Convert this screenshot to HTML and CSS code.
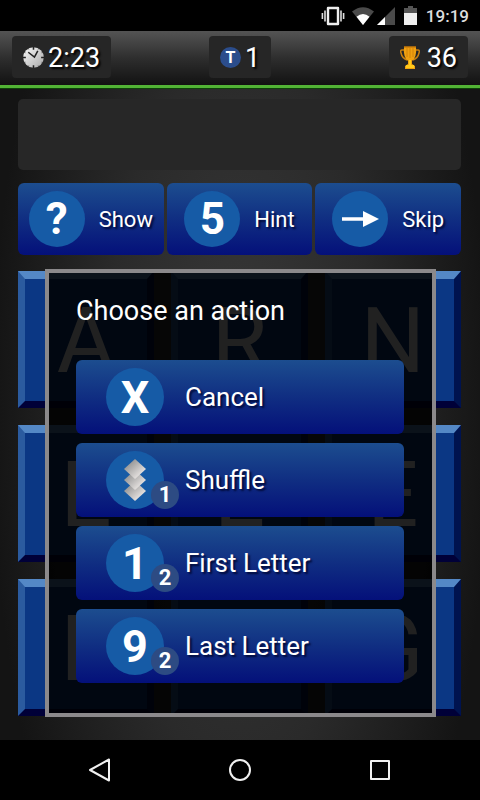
FILE: index.html
```html
<!DOCTYPE html>
<html lang="en">
<head>
<meta charset="utf-8">
<meta name="viewport" content="width=device-width, initial-scale=1">
<title>Word Game</title>
<link rel="stylesheet" href="styles.css">
</head>
<body>
<div class="status">
  <svg width="24" height="20" viewBox="0 0 24 20" aria-hidden="true">
    <path d="M7 2h10v16H7z" fill="none" stroke="#eee" stroke-width="2.4" stroke-linejoin="round"/>
    <path d="M4 4.500v11M20 4.500v11M1.400 7v6M22.600 7v6" stroke="#ddd" stroke-width="1.600"/>
  </svg>
  <svg class="wifi" width="22" height="18" viewBox="0 0 22 18" aria-hidden="true">
    <path d="M0 4.500Q11-4 22 4.500L11 18z" fill="#4a4a4a"/>
    <path d="M4.500 9.800Q11 4 17.500 9.800L11 18z" fill="#fff"/>
  </svg>
  <svg class="signal" width="18" height="18" viewBox="0 0 18 18" aria-hidden="true">
    <path d="M18 0v18H0z" fill="#4a4a4a"/>
    <path d="M8 10v8H0z" fill="#fff"/>
  </svg>
  <svg class="battery" width="13" height="19" viewBox="0 0 13 19" aria-hidden="true">
    <path d="M4 0h5v2h4v5H0V2h4z" fill="#555"/>
    <path d="M0 7h13v12H0z" fill="#eee"/>
  </svg>
  <span class="time">19:19</span>
</div>

<header class="topbar">
  <div class="stat">
    <svg width="21" height="21" viewBox="0 0 22 22" aria-hidden="true">
      <defs><linearGradient id="clock" x1="0" y1="0" x2="1" y2="1"><stop offset="0" stop-color="#f8f8f8"/><stop offset="1" stop-color="#aaa"/></linearGradient></defs>
      <circle cx="11" cy="11" r="10.800" fill="url(#clock)"/>
      <path d="M11 0v3M11 19v3M0 11h3M19 11h3" stroke="#222" stroke-width="1.600"/>
      <path d="M5.500 1.500l.5 1M16.500 1.500l-.5 1M5.500 20.500l.5-1M16.500 20.500l-.5-1M1.500 5.500l1 .5M20.500 5.500l-1 .5M1.500 16.500l1-.5M20.500 16.500l-1-.5" stroke="#444" stroke-width="1"/>
      <path d="M5.500 5.500L12 10.500L15.500 4" fill="none" stroke="#222" stroke-width="1.600"/>
    </svg>
    <span>2:23</span>
  </div>
  <div class="stat">
    <span class="token">T</span>
    <span>1</span>
  </div>
  <div class="stat score">
    <svg width="20" height="23" viewBox="0 0 20 23" aria-hidden="true">
      <path d="M5 4H2Q0 4 1 7Q2 12 7 14M15 4h3q2 0 1 3q-1 5-6 7" fill="none" stroke="#c97f10" stroke-width="1.500"/>
      <path d="M4 1h12q1 10-4 14v3l3 2v3H5v-3l3-2v-3Q3 11 4 1z" fill="#f0a010"/>
      <path d="M7 2v9M10 2v10M13 2v9" stroke="#d48208" stroke-width="1"/>
      <path d="M4 1h12" stroke="#c97a08" stroke-width="1.500"/>
      <path d="M9 14h2v5h3v3H6v-3h3z" fill="#ffcb1a"/>
    </svg>
    <span>36</span>
  </div>
</header>

<main class="game">
  <div class="answer"></div>

  <div class="tools">
    <button class="btn tool" type="button"><span class="disc">?</span>Show</button>
    <button class="btn tool" type="button"><span class="disc">5</span>Hint</button>
    <button class="btn tool" type="button"><span class="disc">
      <svg width="38" height="16" viewBox="0 0 38 16" aria-hidden="true"><path d="M1 6.200h21V0l16 8l-16 8V9.800H1z" fill="#fff"/></svg>
    </span>Skip</button>
  </div>

  <div class="board">
    <div class="tiles">
      <div class="tile">A</div><div class="tile">R</div><div class="tile">N</div>
      <div class="tile">E</div><div class="tile">E</div><div class="tile">E</div>
      <div class="tile">E</div><div class="tile">N</div><div class="tile">G</div>
    </div>

    <section class="dialog" role="dialog" aria-labelledby="dialog-title">
      <h1 id="dialog-title">Choose an action</h1>
      <div class="actions">
        <button class="btn action" type="button"><span class="disc">X</span>Cancel</button>
        <button class="btn action" type="button"><span class="disc">
          <svg width="22" height="42" viewBox="0 0 22 42" aria-hidden="true">
            <defs><linearGradient id="steel" x1="0" y1="0" x2="1" y2="1"><stop offset="0.200" stop-color="#949494"/><stop offset="0.800" stop-color="#e8e4e2"/></linearGradient></defs>
            <path d="M11 22L22 32L11 42L0 32z" fill="url(#steel)"/>
            <path d="M11 11L22 21L11 31L0 21z" fill="url(#steel)"/>
            <path d="M11 0L22 10L11 20L0 10z" fill="url(#steel)"/>
          </svg>
          <span class="badge">1</span></span>Shuffle</button>
        <button class="btn action" type="button"><span class="disc">1<span class="badge">2</span></span>First Letter</button>
        <button class="btn action" type="button"><span class="disc">9<span class="badge">2</span></span>Last Letter</button>
      </div>
    </section>
  </div>
</main>

<nav class="navbar">
  <button type="button" aria-label="Back"><svg width="24" height="24" viewBox="0 0 24 24"><path d="M21 1.500v21L2 12z"/></svg></button>
  <button type="button" aria-label="Home"><svg width="24" height="24" viewBox="0 0 24 24"><circle cx="12" cy="12" r="10"/></svg></button>
  <button type="button" aria-label="Recent apps"><svg width="24" height="24" viewBox="0 0 24 24"><path d="M3 3h18v18H3z"/></svg></button>
</nav>
</body>
</html>
```

FILE: styles.css
```css
* { box-sizing: border-box; }

body {
  margin: 0;
  min-height: 100vh;
  display: flex;
  flex-direction: column;
  background: #000;
  color: #fff;
  font-family: Roboto, "Liberation Sans", sans-serif;
}

button {
  margin: 0;
  padding: 0;
  border: 0;
  background: none;
  color: inherit;
  font: inherit;
  cursor: pointer;
}

svg { display: block; flex: none; }

.status {
  height: 31px;
  padding: 0 11px;
  display: flex;
  align-items: center;
  justify-content: flex-end;
}
.wifi { margin-left: 7px; }
.signal { margin-left: 3px; }
.battery { margin-left: 9px; }
.time {
  margin-left: 9px;
  font-size: 17px;
  font-weight: 500;
  color: #ddd;
}

.topbar {
  padding: 5px 12px 7px;
  display: grid;
  grid-template-columns: 1fr auto 1fr;
  justify-items: start;
  background: linear-gradient(#545454, #2e2e2e 50%, #121212);
}

.stat {
  height: 42px;
  padding: 0 11px;
  display: flex;
  align-items: center;
  gap: 4px;
  border-radius: 4px;
  background: #262626;
  font-size: 27px;
  line-height: 42px;
  text-shadow: 2px 2px 2px #000;
}
.stat span { margin-top: 2px; }
.score {
  justify-self: end;
  gap: 7px;
}

.stat .token {
  width: 21px;
  height: 21px;
  margin-top: 0;
  border-radius: 50%;
  background: #2b4d8c;
  font-size: 16px;
  font-weight: 700;
  line-height: 21px;
  text-align: center;
  text-shadow: none;
}

.game {
  flex: 1;
  padding: 10px 19px 24px 18px;
  display: flex;
  flex-direction: column;
  border-top: 3px solid #52b335;
  box-shadow: inset 0 1px #0c4208;
  background: radial-gradient(ellipse 52% 100% at 50% 50%, #3a3a3a, #2a2a2a 55%, #141414);
}

.answer {
  height: 71px;
  margin-top: 1px;
  border-radius: 5px;
  background: #272727;
}

.btn {
  display: flex;
  align-items: center;
  border-radius: 6px;
  background: linear-gradient(#1c4d8f, #102e82 50%, #04107a);
  text-shadow: 2px 2px 2px #000a38;
}

.disc {
  position: relative;
  flex: none;
  display: flex;
  align-items: center;
  justify-content: center;
  border-radius: 50%;
  background: #165ba6;
  font-weight: 700;
  text-shadow: none;
}

.tools {
  margin-top: 13px;
  display: grid;
  grid-template-columns: repeat(3, 1fr);
  gap: 3px;
}
.tool {
  height: 72px;
  justify-content: center;
  gap: 14px;
  font-size: 22px;
}
.tool .disc {
  width: 56px;
  height: 56px;
  font-size: 44px;
}

.board {
  position: relative;
  flex: 1;
  margin-top: 16px;
  display: grid;
}
.tiles {
  display: grid;
  grid-template: repeat(3, 1fr) / repeat(3, 1fr);
  gap: 17px;
}
.tile {
  padding-top: 4px;
  display: flex;
  align-items: center;
  justify-content: center;
  border: 7px solid;
  border-top-width: 8px;
  border-color: #5488c6 #00134f #000038 #2b5b9f;
  background: #0b3784;
  font-size: 90px;
  line-height: 1;
}

.dialog {
  position: absolute;
  inset: -2px 25px -1px 27px;
  padding: 22px 28px 30px 27px;
  display: flex;
  flex-direction: column;
  justify-content: space-between;
  border: 4px solid #8b898b;
  background: rgba(0, 0, 0, 0.87);
}
.dialog h1 {
  margin: 0;
  font-size: 27px;
  font-weight: 400;
  line-height: 32px;
}

.actions {
  display: grid;
  gap: 9px;
}
.action {
  height: 74px;
  padding: 0 30px;
  gap: 21px;
  font-size: 26px;
}
.action .disc {
  width: 58px;
  height: 58px;
  font-size: 45px;
}

.badge {
  position: absolute;
  right: -15px;
  bottom: 0;
  width: 28px;
  height: 28px;
  border-radius: 50%;
  background: #2d4b83;
  font-size: 22px;
  line-height: 28px;
  text-align: center;
}

.navbar {
  height: 60px;
  display: flex;
  justify-content: center;
  gap: 116px;
}
.navbar svg {
  fill: none;
  stroke: #f0f0f0;
  stroke-width: 2;
  stroke-linejoin: round;
}
```
